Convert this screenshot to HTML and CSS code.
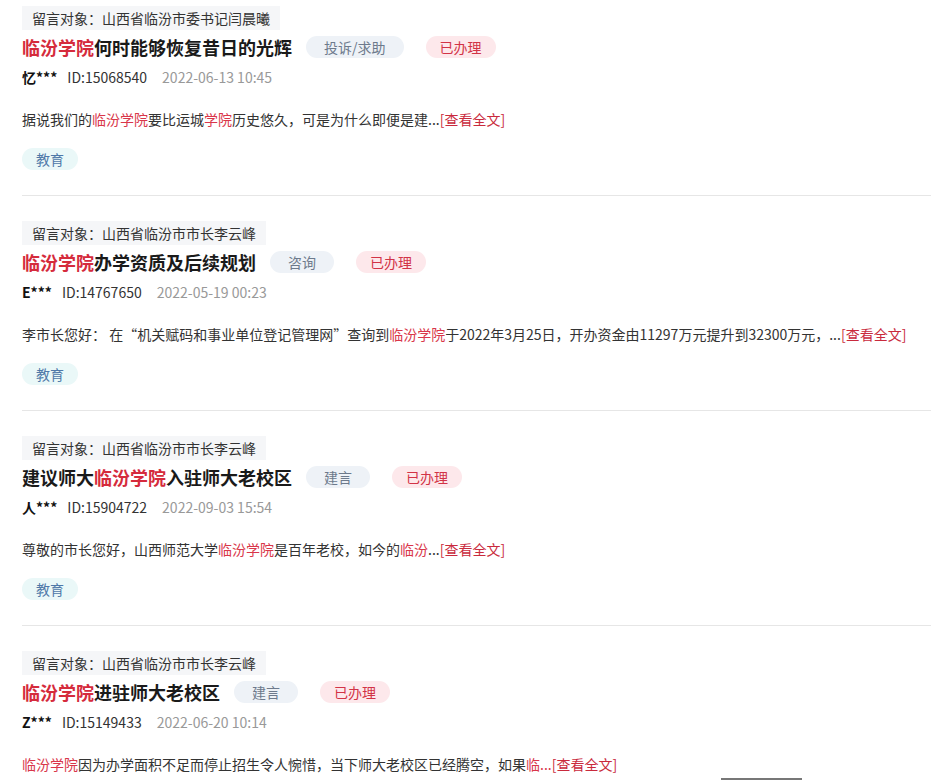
FILE: index.html
```html
<!DOCTYPE html>
<html lang="zh-CN">
<head>
  <meta charset="UTF-8">
  <title>留言列表</title>
  <link rel="stylesheet" href="styles.css">
</head>
<body>

<div class="list">
  <!-- 留言 1 -->
  <div class="item">
    <div class="target">留言对象：山西省临汾市委书记闫晨曦</div>
    <div class="head">
      <h3 class="title"><em>临汾学院</em>何时能够恢复昔日的光辉</h3>
      <span class="badge type">投诉/求助</span>
      <span class="badge status">已办理</span>
    </div>
    <div class="meta">
      <span class="user">忆***</span>
      <span class="id">ID:15068540</span>
      <span class="date">2022-06-13 10:45</span>
    </div>
    <p class="content">据说我们的<em>临汾学院</em>要比运城<em>学院</em>历史悠久，可是为什么即便是建...<a href="#">[查看全文]</a></p>
    <div class="tag">教育</div>
  </div>

  <!-- 留言 2 -->
  <div class="item">
    <div class="target">留言对象：山西省临汾市市长李云峰</div>
    <div class="head">
      <h3 class="title"><em>临汾学院</em>办学资质及后续规划</h3>
      <span class="badge type">咨询</span>
      <span class="badge status">已办理</span>
    </div>
    <div class="meta">
      <span class="user">E***</span>
      <span class="id">ID:14767650</span>
      <span class="date">2022-05-19 00:23</span>
    </div>
    <p class="content">李市长您好： 在“机关赋码和事业单位登记管理网”查询到<em>临汾学院</em>于2022年3月25日，开办资金由11297万元提升到32300万元，...<a href="#">[查看全文]</a></p>
    <div class="tag">教育</div>
  </div>

  <!-- 留言 3 -->
  <div class="item">
    <div class="target">留言对象：山西省临汾市市长李云峰</div>
    <div class="head">
      <h3 class="title">建议师大<em>临汾学院</em>入驻师大老校区</h3>
      <span class="badge type">建言</span>
      <span class="badge status">已办理</span>
    </div>
    <div class="meta">
      <span class="user">人***</span>
      <span class="id">ID:15904722</span>
      <span class="date">2022-09-03 15:54</span>
    </div>
    <p class="content">尊敬的市长您好，山西师范大学<em>临汾学院</em>是百年老校，如今的<em>临汾</em>...<a href="#">[查看全文]</a></p>
    <div class="tag">教育</div>
  </div>

  <!-- 留言 4 -->
  <div class="item">
    <div class="target">留言对象：山西省临汾市市长李云峰</div>
    <div class="head">
      <h3 class="title"><em>临汾学院</em>进驻师大老校区</h3>
      <span class="badge type">建言</span>
      <span class="badge status">已办理</span>
    </div>
    <div class="meta">
      <span class="user">Z***</span>
      <span class="id">ID:15149433</span>
      <span class="date">2022-06-20 10:14</span>
    </div>
    <p class="content"><em>临汾学院</em>因为办学面积不足而停止招生令人惋惜，当下师大老校区已经腾空，如果<em>临...</em><a href="#">[查看全文]</a></p>
    <div class="tag">教育</div>
  </div>
</div>

<div class="float-bar"></div>

</body>
</html>
```

FILE: styles.css
```css
* {
  box-sizing: border-box;
}
body {
  margin: 0;
  background: #fff;
  font-family: "Noto Sans CJK SC", "Liberation Sans", sans-serif;
  color: #333;
  overflow: hidden;
}
em {
  font-style: normal;
  color: #d9364a;
}
.list {
  padding: 6px 0 0 22px;
}
.item {
  padding-bottom: 25px;
  margin-bottom: 25px;
  border-bottom: 1px solid #e6e6e6;
}
.target {
  width: fit-content;
  height: 24px;
  line-height: 24px;
  padding: 0 10px;
  font-size: 14px;
  color: #333;
  background: #f5f6f8;
}
.head {
  display: flex;
  align-items: center;
  margin-top: 4px;
  height: 26px;
}
.title {
  margin: 0;
  font-size: 18px;
  font-weight: bold;
  line-height: 26px;
  color: #1a1a1a;
}
.title em {
  color: #d52b3c;
}
.badge {
  height: 22px;
  line-height: 22px;
  font-size: 14px;
  border-radius: 11px;
}
.badge.type {
  margin-left: 14px;
  padding: 0 18px;
  background: #eef2f7;
  color: #6d7a8c;
}
.badge.status {
  margin-left: 22px;
  padding: 0 14px;
  background: #fde8eb;
  color: #d23346;
}
.meta {
  margin-top: 7px;
  height: 20px;
  line-height: 20px;
  font-size: 14px;
  display: flex;
}
.meta .user {
  color: #111;
  font-weight: bold;
  margin-right: 10px;
}
.meta .id {
  color: #333;
  margin-right: 15px;
}
.meta .date {
  color: #999;
}
.content {
  margin: 22px 0 0;
  height: 20px;
  font-size: 14px;
  line-height: 20px;
  color: #333;
  white-space: nowrap;
}
.content a {
  color: #c92a3c;
  text-decoration: none;
}
.tag {
  width: fit-content;
  margin-top: 19px;
  height: 22px;
  line-height: 22px;
  padding: 0 14px;
  font-size: 14px;
  border-radius: 11px;
  background: #eaf8f8;
  color: #4f78a8;
}
.float-bar {
  position: fixed;
  left: 721px;
  top: 778px;
  width: 81px;
  height: 2px;
  background: #777;
}
```
